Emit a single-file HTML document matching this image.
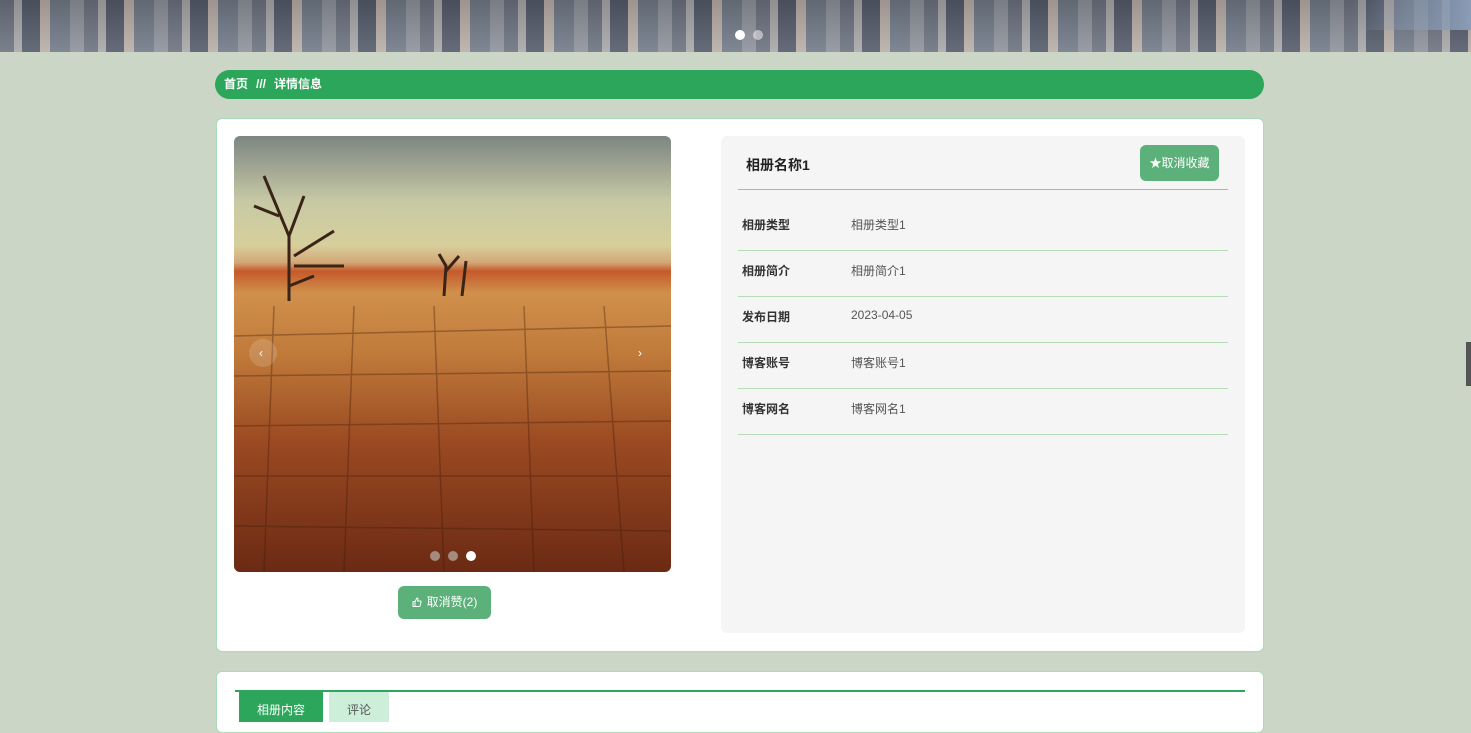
<!DOCTYPE html>
<html><head><meta charset="utf-8"><style>
body{margin:0;width:1471px;height:718px;overflow:hidden;background:#cbd6c6;font-family:"Liberation Sans","Noto Sans CJK SC",sans-serif;position:relative}
.banner{position:absolute;left:0;top:0;width:1471px;height:52px;background:linear-gradient(180deg,rgba(0,0,0,.15),rgba(255,255,255,.1)),repeating-linear-gradient(90deg,#6c7280 0 14px,#a8a7a9 14px 22px,#545b6a 22px 40px,#b9aea8 40px 50px,#717a88 50px 70px,#8e929b 70px 84px);}
.banner:after{content:"";position:absolute;right:0;top:0;width:120px;height:30px;background:linear-gradient(90deg,rgba(120,140,170,0),#8a9cb6)}
.dot{position:absolute;top:30px;width:10px;height:10px;border-radius:50%}
.bc{position:absolute;left:215px;top:70px;width:1049px;height:29px;background:#2ca65a;border-radius:15px;color:#fff;font-size:12px;line-height:29px;font-weight:bold}
.card{position:absolute;left:216px;top:118px;width:1046px;height:532px;background:#fff;border:1px solid #a9dcb9;border-radius:6px}
.img{position:absolute;left:234px;top:136px;width:437px;height:436px;border-radius:6px;overflow:hidden;background:linear-gradient(180deg,#7d8581 0%,#c7c9a5 15%,#d6cf9c 25%,#d4a878 29%,#c55a2b 31%,#d0904c 36%,#c07a3a 50%,#9b4a22 70%,#6b2a14 100%)}
.info{position:absolute;left:721px;top:136px;width:524px;height:497px;background:#f5f5f5;border-radius:6px}
.row{position:absolute;left:17px;width:490px;height:46px;border-bottom:1px solid #b5dcb5;font-size:12px}
.row b{position:absolute;left:4px;top:12px;color:#333}
.row span{position:absolute;left:113px;top:12px;color:#555}
.btn{position:absolute;background:#5cb07a;color:#fff;border-radius:6px;font-size:12px;text-align:center}
.card2{position:absolute;left:216px;top:671px;width:1046px;height:60px;background:#fff;border-radius:6px;border:1px solid #a9dcb9}
</style></head><body>
<div class="banner"></div>
<div class="dot" style="left:735px;background:#fff"></div><div class="dot" style="left:753px;background:rgba(255,255,255,.5)"></div>
<div class="bc"><span style="margin-left:9px">首页</span><span style="margin:0 8px">///</span><span>详情信息</span></div>
<div class="card"></div>
<div class="img">
<svg width="437" height="436" style="position:absolute;left:0;top:0"><g stroke="#3a2418" stroke-width="3" fill="none"><path d="M55 165 L55 100 L30 40 M55 100 L70 60 M45 80 L20 70 M60 120 L100 95 M60 130 L110 130 M55 150 L80 140"/><path d="M210 160 L212 130 L205 118 M212 135 L225 120 M228 160 L232 125"/></g>
<g stroke="rgba(60,25,10,.35)" stroke-width="1.5" fill="none"><path d="M0 200 L437 190 M0 240 L437 235 M0 290 L437 285 M0 340 L437 340 M0 390 L437 395 M40 170 L30 436 M120 170 L110 436 M200 170 L210 436 M290 170 L300 436 M370 170 L390 436"/></g>
<circle cx="29" cy="217" r="14" fill="rgba(255,255,255,.15)"/><text x="25" y="221" fill="#fff" font-size="12">‹</text><text x="404" y="221" fill="#fff" font-size="12">›</text>
<circle cx="201" cy="420" r="5" fill="rgba(200,200,200,.6)"/><circle cx="219" cy="420" r="5" fill="rgba(200,200,200,.6)"/><circle cx="237" cy="420" r="5" fill="#fff"/></svg></div>
<div class="btn" style="left:398px;top:586px;width:93px;height:33px;line-height:33px"><svg width="10" height="10" viewBox="0 0 10 10" style="vertical-align:-1px;margin-right:5px"><path d="M1 4.5h2v5H1z M3 4.5 L5 1 Q6.2 1 6 2.5 L5.7 4 H8.5 Q9.3 4.2 9 5 L8 9 Q7.8 9.5 7 9.5 H3" fill="none" stroke="#fff" stroke-width="1"/></svg>取消赞(2)</div>
<div class="info">
<div style="position:absolute;left:25px;top:19px;font-size:14px;font-weight:bold;color:#222">相册名称1</div>
<div class="btn" style="left:419px;top:9px;width:79px;height:36px;line-height:36px">★取消收藏</div>
<div style="position:absolute;left:17px;top:53px;width:490px;border-top:1px solid #8ccb8c"></div>
<div class="row" style="top:68px"><b>相册类型</b><span>相册类型1</span></div>
<div class="row" style="top:114px"><b>相册简介</b><span>相册简介1</span></div>
<div class="row" style="top:160px"><b>发布日期</b><span>2023-04-05</span></div>
<div class="row" style="top:206px"><b>博客账号</b><span>博客账号1</span></div>
<div class="row" style="top:252px"><b>博客网名</b><span>博客网名1</span></div>
</div>
<div class="card2"><div style="position:absolute;left:18px;top:18px;width:1010px;border-top:2px solid #2ca65a"></div>
<div style="position:absolute;left:22px;top:20px;width:84px;height:30px;background:#2ca65a;color:#fff;font-size:12px;text-align:center;line-height:36px">相册内容</div>
<div style="position:absolute;left:112px;top:20px;width:60px;height:30px;background:#cdeed8;color:#555;font-size:12px;text-align:center;line-height:36px">评论</div></div>
<div style="position:absolute;left:1466px;top:342px;width:5px;height:44px;background:#555"></div>
</body></html>
